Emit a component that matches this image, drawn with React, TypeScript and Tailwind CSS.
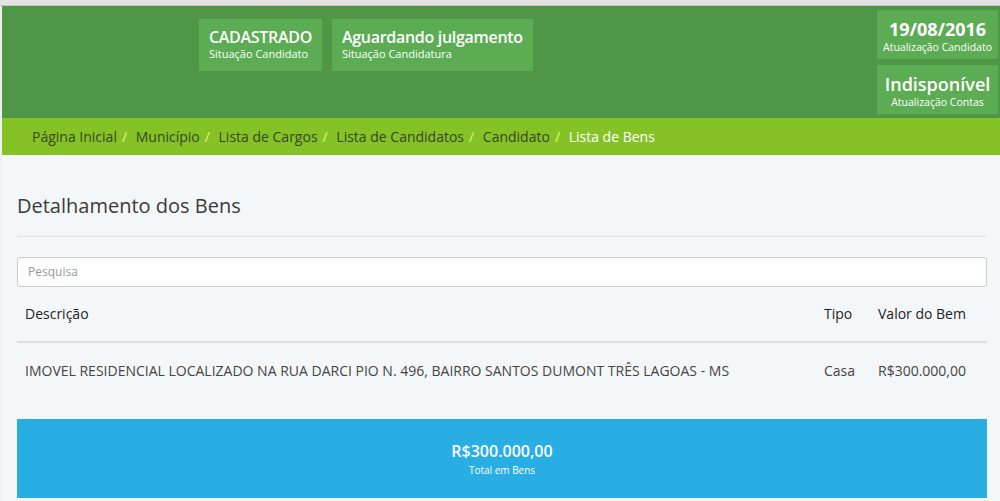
import React from "react";

const font = { fontFamily: '"Open Sans", "Noto Sans", sans-serif' };

function StatusBox({ title, sub }: { title: string; sub: string }) {
  return (
    <div className="h-[52px] bg-[#5cac54] px-[10px] pt-[8px] text-white">
      <div className="text-[16px] leading-[20px] font-semibold tracking-[-0.3px] whitespace-nowrap">{title}</div>
      <div className="text-[11px] leading-[14px] whitespace-nowrap">{sub}</div>
    </div>
  );
}

function RightBox({ title, sub, bold }: { title: string; sub: string; bold?: boolean }) {
  return (
    <div className="h-[49px] w-[121px] bg-[#5cac54] pt-[8px] text-center text-white">
      <div className={`text-[18px] leading-[22px] whitespace-nowrap ${bold ? "font-bold" : "font-semibold"}`}>{title}</div>
      <div className="text-[10.5px] leading-[14px] whitespace-nowrap">{sub}</div>
    </div>
  );
}

export default function App() {
  const crumbs = ["Página Inicial", "Município", "Lista de Cargos", "Lista de Candidatos", "Candidato"];
  return (
    <div className="w-[1000px] h-[501px] overflow-hidden bg-[#f0f0f0]" style={font}>
      <div className="h-[6px] bg-[#e4e4e4] border-b border-[#c4c4c4]" />
      <div className="ml-[2px]">
        <header className="h-[112px] bg-[#4f9747] flex justify-between items-start">
          <div className="ml-[197px] mt-[13px] flex gap-[10px]">
            <StatusBox title="CADASTRADO" sub="Situação Candidato" />
            <StatusBox title="Aguardando julgamento" sub="Situação Candidatura" />
          </div>
          <div className="mt-[4px] mr-[2px] flex flex-col gap-[6px]">
            <RightBox title="19/08/2016" sub="Atualização Candidato" bold />
            <RightBox title="Indisponível" sub="Atualização Contas" />
          </div>
        </header>
        <nav className="h-[37px] bg-[#85c226] flex items-center pl-[30px] text-[14px] leading-[20px]">
          {crumbs.map((c) => (
            <span key={c} className="flex items-center">
              <span className="text-[#3a4622]">{c}</span>
              <span className="px-[5px] text-[#e2f48c]">/{"\u00a0"}</span>
            </span>
          ))}
          <span className="text-white">Lista de Bens</span>
        </nav>
        <main className="bg-[#f4f7f9] pl-[15px] pr-[13px] h-[346px]">
          <h3 className="pt-[39px] text-[20px] leading-[24px] font-normal text-[#3a3a3a]">Detalhamento dos Bens</h3>
          <div className="mt-[18px] border-t border-[#dde2e6]" />
          <div className="mt-[20px] h-[30px] rounded-[3px] border border-[#cccccc] bg-white flex items-center px-[10px]">
            <span className="text-[12px] text-[#999]">Pesquisa</span>
          </div>
          <div className="mt-[2px] h-[54px] pb-[4px] border-b-2 border-[#dddddd] grid grid-cols-[1fr_54px_117px] items-center text-[14px] text-[#222]">
            <div className="pl-[8px]">Descrição</div>
            <div className="pl-[8px]">Tipo</div>
            <div className="pl-[8px]">Valor do Bem</div>
          </div>
          <div className="h-[58px] pb-[4px] grid grid-cols-[1fr_54px_117px] items-center text-[14px] text-[#444]">
            <div className="pl-[8px] whitespace-nowrap">IMOVEL RESIDENCIAL LOCALIZADO NA RUA DARCI PIO N. 496, BAIRRO SANTOS DUMONT TRÊS LAGOAS - MS</div>
            <div className="pl-[8px]">Casa</div>
            <div className="pl-[8px] whitespace-nowrap">R$300.000,00</div>
          </div>
          <div className="mt-[18px] h-[79px] bg-[#28aee3] flex flex-col items-center justify-center text-white">
            <div className="text-[16px] leading-[22px] font-semibold">R$300.000,00</div>
            <div className="text-[10px] leading-[14px] mt-[1px]">Total em Bens</div>
          </div>
        </main>
      </div>
    </div>
  );
}
